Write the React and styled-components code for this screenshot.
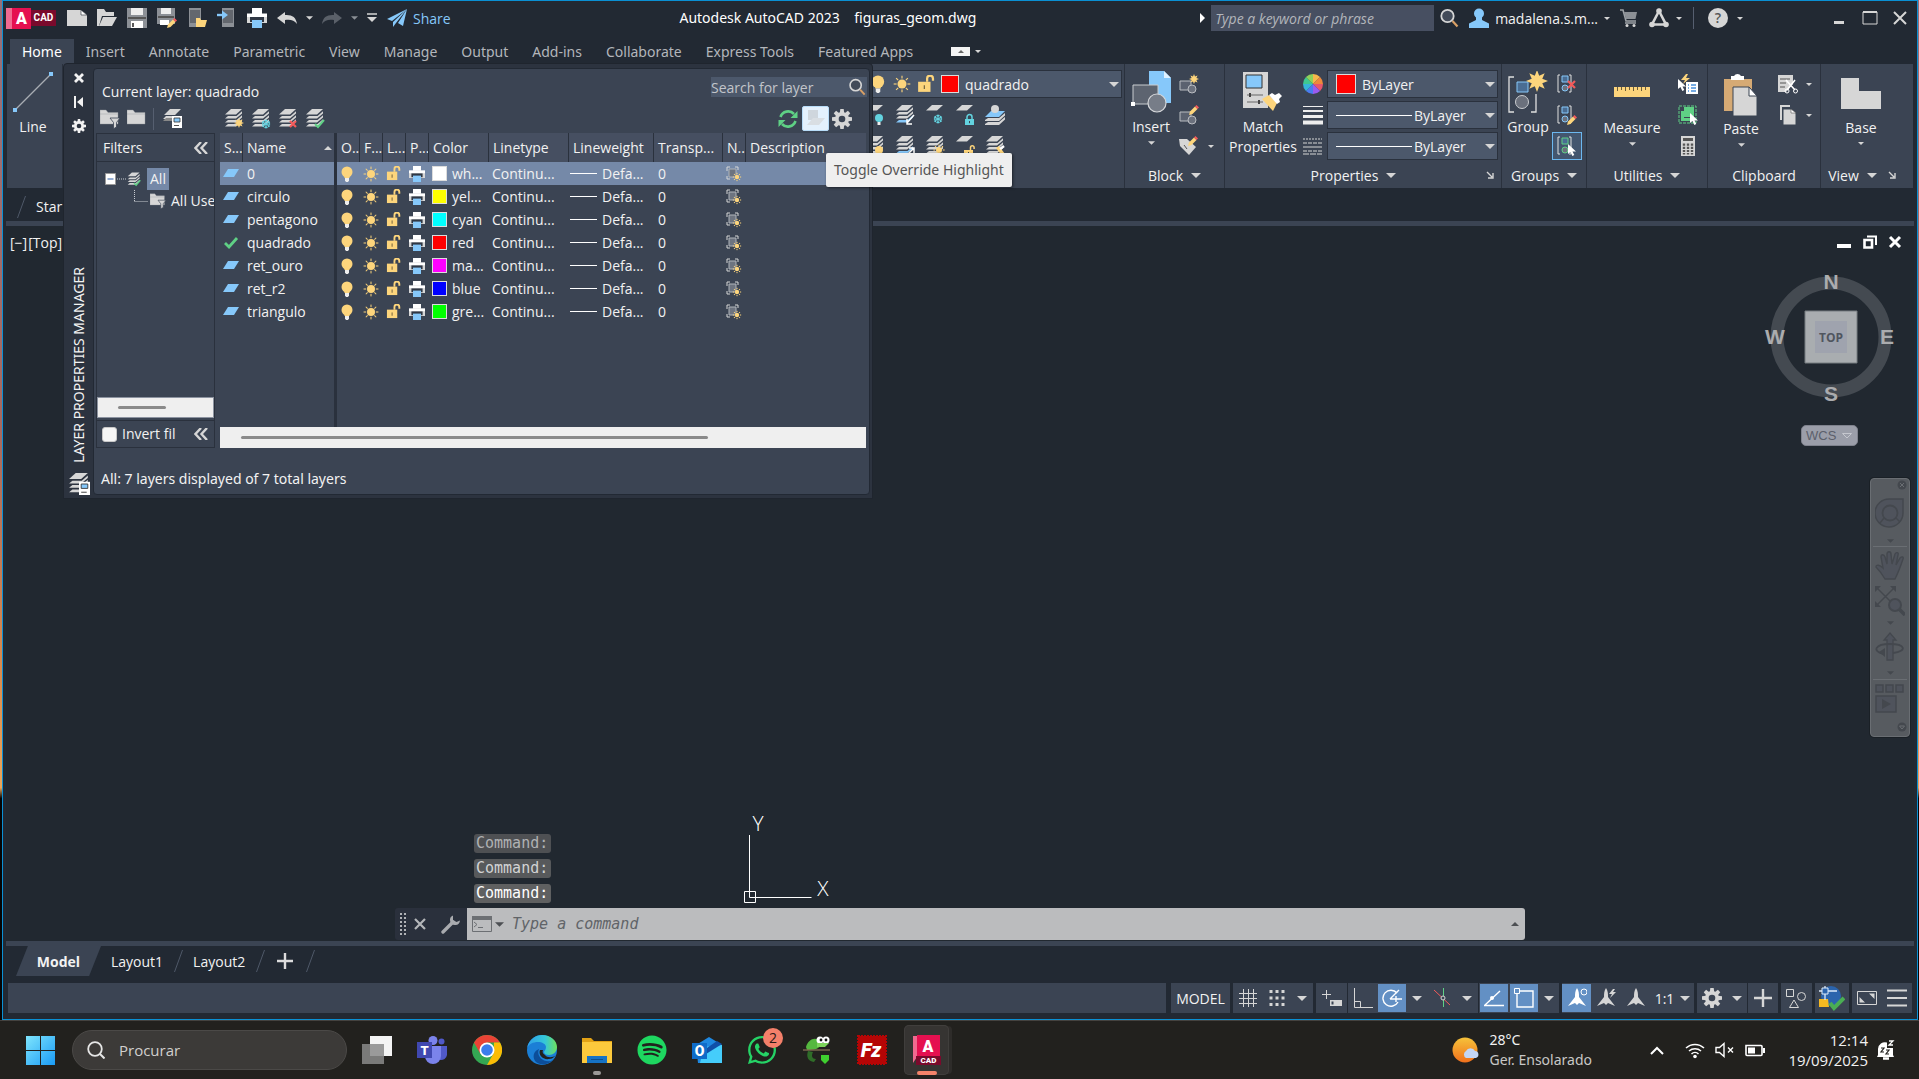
import React from "react";
import styled, { createGlobalStyle, css } from "styled-components";
import { FaSpotify, FaWhatsapp } from "react-icons/fa";

const c = {
  frame: "#222933",
  canvas: "#212830",
  panel: "#3b4453",
  line: "#2a313d",
  field: "#4c586b",
  head: "#464f61",
  select: "#7589a8",
  text: "#f2f2f2",
  dim: "#b3b6bb",
  icon: "#d6d6d6",
  blue: "#86c8fa",
  yellow: "#fdd57c",
  red: "#f25a5a",
  green: "#5fd085",
  teal: "#63d3e0",
  active: "#6390c4",
  border: "#0a90d4",
};

const wide = `"Noto Sans", "Open Sans", sans-serif`;

const Global = createGlobalStyle`
  html, body { margin: 0; height: 100%; background: #000; }
  *, *::before, *::after { box-sizing: border-box; }
  body, button, input, select, table {
    font-family: "Open Sans", "Noto Sans", sans-serif;
    font-size: 14px;
    color: ${c.text};
  }
  body { line-height: 20px; overflow: hidden; }
  button { border: 0; padding: 0; margin: 0; background: none; }
  svg { display: block; flex: none; }
`;

/* ---------- shell ---------- */

const Desktop = styled.div`
  display: flex;
  flex-direction: column;
  height: 100vh;
  background: linear-gradient(#94707a 0, #a8685c 40%, #d98a4c 62%, #e9a55a 73%, #050505 74%);
`;

const AppWindow = styled.div`
  position: relative;
  flex: 1;
  min-height: 0;
  margin: 0 1px 0 2px;
  display: flex;
  flex-direction: column;
  background: ${c.frame};
  border: 1px solid ${c.border};
`;

const Row = styled.div`
  display: flex;
  align-items: center;
  gap: ${(p) => p.$gap || 0}px;
`;

const IconButton = styled.button`
  display: flex;
  align-items: center;
  justify-content: center;
  flex: none;
  width: ${(p) => p.$w || 30}px;
  height: ${(p) => p.$h || 28}px;
  ${(p) =>
    p.$pressed &&
    css`
      background: #43566f;
      border: 1px solid #6cb8f0;
    `}
`;

const Caret = ({ w = 8, color = c.icon, up }) => (
  <svg width={w} height={Math.ceil(w / 2)} viewBox="0 0 8 4">
    <path d={up ? "M0 4h8L4 0z" : "M0 0h8L4 4z"} fill={color} />
  </svg>
);

/* ---------- icon drawing helpers ---------- */

const I = ({ s = 20, w, h, box, children }) => (
  <svg width={w || s} height={h || s} viewBox={box || "0 0 20 20"} fill="none">
    {children}
  </svg>
);

const Sheets = ({ n = 3, bottom = c.icon, top = c.icon }) => (
  <>
    <path d="M7 0h11l-6 5.500H1z" fill={top} />
    {n > 1 && <path d="M1 9.500 4 7h8.500L18 2.200V4.500L12 9.500z" fill={n === 2 ? bottom : c.icon} />}
    {n > 2 && <path d="M1 13.500 4 11h8.500L18 6.200V8.500L12 13.500z" fill={c.icon} />}
    {n > 2 && <path d="M1 17.500 4 15h8.500L18 10.200V12.500L12 17.500z" fill={bottom} />}
  </>
);

const SunMark = ({ x = 15, y = 15, r = 3, color = c.yellow }) => (
  <g transform={`translate(${x} ${y})`}>
    <circle r={r} fill={color} />
    {[0, 45, 90, 135, 180, 225, 270, 315].map((a) => (
      <path key={a} d={`M0 ${-r - 0.8}V${-r * 1.8 - 0.2}`} stroke={color} strokeWidth="1" transform={`rotate(${a})`} />
    ))}
  </g>
);

const StarMark = ({ x, y, r }) => (
  <path
    transform={`translate(${x} ${y}) scale(${r})`}
    d="M0-1 .2-.48.7-.7.48-.2 1 0 .48.2.7.7.2.48 0 1-.2.48-.7.7-.48.2-1 0-.48-.2-.7-.7-.2-.48z"
    fill={c.yellow}
  />
);

const SnowMark = ({ x = 15, y = 15, color = c.teal }) => (
  <g transform={`translate(${x} ${y})`} stroke={color} strokeWidth="1.100">
    {[0, 60, 120].map((a) => (
      <path key={a} d="M0-4.500V4.500M-1.500-3.800 0-2.500 1.500-3.800M-1.500 3.800 0 2.500 1.500 3.800" transform={`rotate(${a})`} />
    ))}
  </g>
);

const LockMark = ({ x = 11, y = 11, color = c.yellow, open = true }) => (
  <g transform={`translate(${x} ${y})`}>
    <path d="M0 4h9v6H0z" fill={color} />
    <path d={open ? "M6.500 4V1.500a1.800 1.800 0 0 1 3.600 0V3" : "M2 4V2a2.500 2.500 0 0 1 5 0v2"} stroke={color} strokeWidth="1.500" />
    <path d="M4.500 6v2.200" stroke="#3b4453" />
  </g>
);

const Pencil = ({ x = 10, y = 10 }) => (
  <g transform={`translate(${x} ${y})`}>
    <path d="M1 6.500 6 1.500 8.500 4 3.500 9 0 10z" fill={c.yellow} />
    <path d="M6 1.500 7.500 0 10 2.500 8.500 4z" fill={c.red} />
  </g>
);

const Cursor = ({ x = 10, y = 8, s = 1 }) => (
  <path transform={`translate(${x} ${y}) scale(${s})`} d="M0 0v10l2.500-2 1.800 4 2-1-1.800-3.600H8z" fill="#fff" />
);

const Tick = ({ x = 9, y = 11 }) => (
  <path transform={`translate(${x} ${y})`} d="m1 4 3 3L10 0" stroke={c.green} strokeWidth="2" />
);

const Folder = ({ w = 14 }) => (
  <path d={`M0 1h6l2 2.500h${w - 8}V15H0z M0 5h${w}`} fill={c.icon} stroke="#8f949b" strokeWidth=".4" />
);

const Funnel = ({ x = 10, y = 9 }) => (
  <path transform={`translate(${x} ${y})`} d="M0 0h10L6.500 4.500V9l-3 1.800V4.500z" fill={c.icon} stroke={c.panel} strokeWidth=".8" />
);

const Bulb = ({ s = 16 }) => (
  <I s={s} box="0 0 16 16">
    <circle cx="8" cy="6" r="5.500" fill={c.yellow} />
    <path d="M5.500 10h5v2h-5z" fill={c.yellow} />
    <path d="M6 12h4v2.500l-1 1.500H7l-1-1.500z" fill="#eee" />
  </I>
);
const Sun = ({ s = 16 }) => (
  <I s={s} box="0 0 16 16">
    <SunMark x={8} y={8} r={4} />
  </I>
);
const Unlock = ({ s = 16 }) => (
  <I s={s} box="0 0 16 16">
    <path d="M1 6h11v9H1z" fill={c.yellow} />
    <path d="M9 6V3.200a2.600 2.600 0 0 1 5.200 0V5" stroke={c.yellow} strokeWidth="2" />
    <path d="M6.500 9v3.500" stroke="#6b5c3a" />
  </I>
);
const Printer = ({ s = 16 }) => (
  <I s={s} box="0 0 20 20">
    <path d="M5 0h10v6H5z" fill="#fff" />
    <path d="M0 6h20v9H0z" fill={c.icon} />
    <path d="M3 9h14v5H3z" fill="#2f3744" />
    <path d="M0 5.500h20V9H0z" fill="#fff" />
    <path d="M5 12h10v8H5z" fill={c.blue} />
  </I>
);
const Magnifier = ({ s = 20 }) => (
  <I s={s} box="0 0 20 20">
    <circle cx="8.500" cy="8" r="6.200" stroke={c.icon} strokeWidth="1.800" fill="#434b59" />
    <path d="m13.500 13 5 5.500" stroke="#d9a066" strokeWidth="2.200" />
  </I>
);
const Gear = ({ s = 20, color = c.icon, hole = c.panel }) => (
  <I s={s}>
    {[0, 45, 90, 135].map((a) => (
      <path key={a} d="M8.300 0h3.400l.5 4v12l-.5 4H8.300l-.5-4V4z" fill={color} transform={`rotate(${a} 10 10)`} />
    ))}
    <circle cx="10" cy="10" r="7" fill={color} />
    <circle cx="10" cy="10" r="3.300" fill={hole} />
  </I>
);
const Double = () => (
  <I w={14} h={12} box="0 0 14 12">
    <path d="M7 0 1.500 6 7 12M13 0 7.500 6 13 12" stroke={c.icon} strokeWidth="2.400" />
  </I>
);
const PaletteMark = () => (
  <I s={20}>
    <path d="M8 0h11l-6 6H2zM4 7h8l-1 3H1z" fill={c.icon} />
    <path d="M1 12 4 9h6v3z" fill="#888" />
    <path d="M10 7h10v12H10z" fill="#fff" />
    <path d="M12 9h6v4h-6z" fill={c.blue} stroke="#333" strokeWidth=".8" />
    <path d="M12 16.500h5" stroke="#555" />
  </I>
);

/* ---------- title bar ---------- */

const TitleBar = styled.header`
  display: flex;
  align-items: center;
  height: 38px;
  padding: 0 2px 4px 3px;
`;
const Brand = styled.div`
  display: flex;
  align-items: center;
  margin-right: 6px;
  font-family: "Roboto", sans-serif;
  color: #fff;
`;
const BrandA = styled.span`
  width: 25px;
  height: 21px;
  padding-left: 6px;
  text-align: center;
  font-size: 16px;
  font-weight: 900;
  line-height: 21px;
  background: linear-gradient(90deg, #f06a90 6px, #e51050 6px);
`;
const BrandCad = styled.span`
  width: 25px;
  height: 16px;
  text-align: center;
  font-size: 10px;
  font-weight: 700;
  line-height: 16px;
  background: #7a0a2c;
`;
const ShareButton = styled.button`
  display: flex;
  align-items: center;
  gap: 6px;
  padding: 0 5px;
  color: ${c.blue};
`;
const WindowTitle = styled.h1`
  flex: 1;
  margin: 0;
  text-align: center;
  font-family: ${wide};
  font-size: 14px;
  font-weight: 400;
  color: #fff;
  white-space: pre;
`;
const HelpSearch = styled.input`
  width: 223px;
  height: 26px;
  padding: 0 4px;
  margin-left: 6px;
  border: 0;
  background: #474f61;
  font-style: italic;
  &::placeholder { color: ${c.dim}; opacity: 1; }
`;
const UserButton = styled.button`
  display: flex;
  align-items: center;
  gap: 6px;
  padding: 0 4px 0 5px;
`;
const Divider = styled.span`
  width: 1px;
  height: ${(p) => p.$h || 22}px;
  background: #565f70;
  margin: 0 ${(p) => p.$m || 0}px;
`;
const Push = styled.span`
  width: ${(p) => p.$w}px;
  flex: none;
`;

const quick = {
  New: <I><path d="M0 2h14l6 5v11H0z" fill={c.icon} /><path d="M14 2v5h6z" fill="#fff" stroke={c.frame} strokeWidth=".6" /></I>,
  Open: <I><path d="M0 1h7l2 3h8v4H5L2 18H0z" fill={c.icon} /><path d="M6 9h14l-5 9H2z" fill={c.icon} /></I>,
  Save: <I><path d="M0 0h20v20H0z" fill="#8c9096" /><path d="M4 0h12v7H4z" fill="#eee" /><path d="M1 9h18v2H1z" fill="#555" /><path d="M4 13h12v7H4z" fill="#fff" /><path d="M6 15v4" stroke="#222" strokeWidth="1.500" /></I>,
  "Save As": <I><path d="M0 0h18v16H0z" fill="#8c9096" /><path d="M4 0h10v6H4z" fill="#eee" /><path d="M1 8h16v2H1z" fill="#555" /><path d="M3 12h9v5H3z" fill="#fff" /><Pencil /></I>,
  "Open from Web": <I><path d="M2 0h12v19H2z" fill="#8c9096" /><path d="M3 2h10v13H3z" fill="#63676e" /><path d="M9 10h4l1 2h6l-2 7H9z" fill={c.yellow} /></I>,
  "Save to Web": <I><path d="M5 0h12v19H5z" fill="#8c9096" /><path d="M6 2h10v13H6z" fill="#63676e" /><path d="M0 7h6" stroke={c.blue} strokeWidth="2.400" /><path d="M5 2.500 11 7l-6 4.500z" fill={c.blue} /></I>,
  Plot: <Printer s={20} />,
  Undo: <I><path d="M0 10 8 4v3c7-.5 11 2 12 9-3-4-6-4.500-12-4v4z" fill={c.icon} /></I>,
};

function Title() {
  return (
    <TitleBar>
      <Brand>
        <BrandA>A</BrandA>
        <BrandCad>CAD</BrandCad>
      </Brand>
      {Object.entries(quick).map(([k, v]) => (
        <IconButton key={k} aria-label={k}>{v}</IconButton>
      ))}
      <IconButton $w={15} aria-label="Undo list"><Caret w={7} /></IconButton>
      <IconButton aria-label="Redo">
        <I><path d="M20 10 12 4v3C5 6.500 1 9 0 16c3-4 6-4.500 12-4v4z" fill="#5a6069" /></I>
      </IconButton>
      <IconButton $w={15} aria-label="Redo list"><Caret w={7} color="#8a8f96" /></IconButton>
      <IconButton $w={20} aria-label="Customize quick access">
        <I w={10} h={10} box="0 0 10 10"><path d="M0 1h10" stroke={c.icon} strokeWidth="1.500" /><path d="M0 4h10L5 9z" fill={c.icon} /></I>
      </IconButton>
      <ShareButton>
        <I><path d="M20 1 0 11l5 2zM20 1 6 14v5l3-4zM20 1l-9 14 5 3z" fill={c.blue} /></I>
        Share
      </ShareButton>
      <WindowTitle>{"Autodesk AutoCAD 2023    figuras_geom.dwg"}</WindowTitle>
      <I w={5} h={10} box="0 0 5 10"><path d="M0 0v10l5-5z" fill="#fff" /></I>
      <HelpSearch placeholder="Type a keyword or phrase" aria-label="Type a keyword or phrase" />
      <IconButton aria-label="Search help"><Magnifier /></IconButton>
      <UserButton>
        <I><circle cx="10" cy="5.500" r="5" fill={c.blue} /><path d="M7 9h6v3l7 3.500V20H0v-4.500L7 12z" fill={c.blue} /></I>
        madalena.s.m...
        <Caret w={6} />
      </UserButton>
      <IconButton aria-label="Store">
        <I><path d="M1 2h3l3 11h10M6 15h11" stroke="#9da1a6" strokeWidth="1.600" /><path d="M5 4h13l-1.500 7H7z" fill="#8c9096" /><circle cx="8" cy="17.500" r="1.500" fill={c.icon} /><circle cx="15" cy="17.500" r="1.500" fill={c.icon} /></I>
      </IconButton>
      <IconButton aria-label="Autodesk Access">
        <I><path d="M10 3 3 16.500h14z" stroke={c.icon} strokeWidth="2.600" /><circle cx="10" cy="3" r="2.800" fill={c.icon} /><circle cx="3" cy="16.500" r="2.800" fill={c.icon} /><circle cx="17" cy="16.500" r="2.800" fill={c.icon} /></I>
      </IconButton>
      <IconButton $w={10} aria-label="Access list"><Caret w={6} /></IconButton>
      <Divider $m={9} />
      <IconButton aria-label="Help">
        <I><circle cx="10" cy="10" r="10" fill={c.icon} /><text x="10" y="15" textAnchor="middle" fontSize="14" fontWeight="600" fill="#555">?</text></I>
      </IconButton>
      <IconButton $w={14} aria-label="Help list"><Caret w={6} /></IconButton>
      <Push $w={76} />
      <IconButton $w={31} aria-label="Minimize"><I w={16} h={16} box="0 0 16 16"><path d="M3 11h10v3H3z" fill={c.icon} /></I></IconButton>
      <IconButton $w={31} aria-label="Maximize"><I w={16} h={16} box="0 0 16 16"><path d="M1 2h14v12H1z" stroke={c.icon} /><path d="M1 2h14" stroke={c.icon} strokeWidth="2" /></I></IconButton>
      <IconButton aria-label="Close"><I w={16} h={16} box="0 0 16 16"><path d="m2 2 12 12M14 2 2 14" stroke={c.icon} strokeWidth="2" /></I></IconButton>
    </TitleBar>
  );
}

/* ---------- ribbon ---------- */

const Tabs = styled.nav`
  display: flex;
  align-items: center;
  height: 25px;
  padding-left: 7px;
`;
const Tab = styled.button`
  height: 25px;
  padding: 0 12px;
  font-family: ${wide};
  line-height: 24px;
  color: ${(p) => (p.$on ? "#fff" : c.dim)};
  background: ${(p) => (p.$on ? c.panel : "transparent")};
`;
const Pill = styled.span`
  display: flex;
  align-items: center;
  justify-content: center;
  width: 19px;
  height: 9px;
  margin: 0 5px 0 26px;
  background: #f4f4f4;
`;
const Ribbon = styled.div`
  display: flex;
  height: 124px;
  margin: 0 4px;
  background: ${c.panel};
`;
const Panel = styled.section`
  display: flex;
  flex-direction: column;
  ${(p) => (p.$w ? `width: ${p.$w}px;` : "flex: 1;")}
  border-right: ${(p) => (p.$last ? 0 : 1)}px solid ${c.line};
`;
const PanelBody = styled.div`
  display: flex;
  align-items: flex-start;
  justify-content: ${(p) => p.$justify || "flex-start"};
  gap: ${(p) => p.$gap || 0}px;
  flex: 1;
  padding: 6px ${(p) => p.$pr || 0}px 0 ${(p) => p.$pl || 0}px;
`;
const PanelFoot = styled.footer`
  display: flex;
  align-items: center;
  height: 24px;
  padding: 0 ${(p) => p.$corner || 0}px 2px 0;
`;
const PanelName = styled.button`
  display: flex;
  align-items: center;
  justify-content: center;
  gap: 8px;
  flex: 1;
`;
const Big = styled.button`
  display: flex;
  flex-direction: column;
  align-items: center;
  width: ${(p) => p.$w}px;
  line-height: 20px;
  flex: none;
`;
const BigArt = styled.span`
  display: flex;
  align-items: center;
  height: ${(p) => p.$h || 44}px;
  margin-bottom: ${(p) => (p.$h ? 0 : 3)}px;
`;
const BigCaret = styled.span`
  padding-top: 4px;
`;
const Stackv = styled.div`
  display: flex;
  flex-direction: column;
  gap: 3px;
  flex: ${(p) => (p.$grow ? 1 : "none")};
`;
const Combo = styled.label`
  display: flex;
  align-items: center;
  gap: ${(p) => p.$gap || 6}px;
  height: 28px;
  padding: 0 2px 0 8px;
  background: ${c.field};
  border: 1px solid ${c.line};
`;
const Pick = styled.select`
  appearance: none;
  border: 0;
  background: transparent;
  padding: 0;
  flex: ${(p) => (p.$grow ? 1 : "none")};
  width: ${(p) => (p.$grow ? "auto" : "69px")};
  height: 24px;
`;
const Swatch = styled.span`
  width: ${(p) => p.$s}px;
  height: ${(p) => p.$s}px;
  flex: none;
  background: ${(p) => p.$c};
  border: 1px solid #dcdcdc;
`;
const Rule = styled.span`
  height: 1px;
  background: #fff;
  width: ${(p) => (p.$w ? p.$w + "px" : "auto")};
  flex: ${(p) => (p.$w ? "none" : 1)};
`;
const CaretSlot = styled.button`
  display: flex;
  align-items: center;
  height: 28px;
  margin-left: -8px;
`;
const LowCaret = styled.button`
  align-self: flex-start;
  margin-top: 62px;
  width: 14px;
  height: 28px;
  display: flex;
  align-items: center;
  justify-content: center;
`;

const Foot = ({ name, menu = true, corner }) => (
  <PanelFoot $corner={corner}>
    <PanelName>
      {name}
      {menu && <Caret w={10} />}
    </PanelName>
    {corner && (
      <IconButton $w={16} $h={16} aria-label={`${name} settings`}>
        <I s={8} box="0 0 8 8"><path d="M1 1l5 5M7 2v5H2" stroke={c.icon} strokeWidth="1.400" /></I>
      </IconButton>
    )}
  </PanelFoot>
);

const blockBase = (
  <>
    <path d="M1 7h11v9H1z" fill="#5b6270" stroke="#b9bcc1" />
    <circle cx="13" cy="15" r="4" fill="#6b717d" stroke="#b9bcc1" />
  </>
);
const groupBase = (color) => (
  <>
    <path d="M3 1H1v17h2M12 1h2v17h-2" stroke="#e0e0e0" />
    <path d="M5 2h6v6H5z" fill="#4a6d93" stroke={color} />
    <circle cx="8" cy="14" r="3" stroke={color} fill="#6b717d" />
  </>
);

const layerTools = [
  [<I key="a"><Sheets n={1} /><circle cx="14" cy="13" r="4" fill={c.teal} /><path d="M12.500 17h3v3h-3z" fill="#eee" /></I>, "Off"],
  [<I key="b"><Sheets bottom={c.blue} /><path d="m19 10-7 8M12 14v5h5" stroke="#fff" strokeWidth="1.500" /></I>, "Isolate"],
  [<I key="c"><Sheets n={1} /><SnowMark x={13} y={14} /></I>, "Freeze"],
  [<I key="d"><Sheets n={1} /><LockMark x={10} y={10} color={c.teal} open={false} /></I>, "Lock"],
  [<I key="e"><path d="M6 6h14l-6 6H0z" fill={c.blue} /><circle cx="10" cy="4" r="4" fill={c.icon} /><path d="m0 15 3-2h11l6-5v2.500L14 16H0zM0 19l3-2h11l6-5v2.500L14 20H0z" fill={c.icon} /></I>, "Make Current"],
  [<I key="f"><Sheets /><circle cx="14" cy="14" r="4" fill={c.yellow} /></I>, "Turn All On"],
  [<I key="g"><Sheets bottom={c.blue} /><path d="m12 19 7-7M14 12h5v5" stroke="#fff" strokeWidth="1.500" /></I>, "Unisolate"],
  [<I key="h"><Sheets /><SunMark x={14} y={14} /></I>, "Thaw"],
  [<I key="i"><Sheets n={1} /><LockMark x={9} y={10} /></I>, "Unlock"],
  [<I key="j"><Sheets /><path d="m11 12 6 8 3-2-6-8z" fill={c.yellow} /><path d="m15 13 4-3" stroke="#fff" strokeWidth="2.500" /></I>, "Match"],
];
const LayerGrid = styled.div`
  display: grid;
  grid-template-columns: repeat(5, 30px);
  grid-auto-rows: 28px;
  row-gap: 3px;
  margin-top: 3px;
`;
const LayerArea = styled.div`
  width: 262px;
`;

function RibbonBar() {
  return (
    <Ribbon>
      <Panel $w={56}>
        <PanelBody $pl={3}>
          <Big $w={46}>
            <BigArt>
              <I w={40} h={40} box="0 0 40 40"><path d="M2 38 38 2" stroke="#a8adb3" strokeWidth="1.200" /><path d="M0 36h4v4H0zM36 0h4v4h-4z" fill={c.blue} /></I>
            </BigArt>
            Line
          </Big>
        </PanelBody>
      </Panel>
      <Panel>
        <PanelBody $justify="flex-end" $pr={2}>
          <LayerArea>
            <Combo $gap={6}>
              <Bulb s={18} /><Sun s={18} /><Unlock s={18} />
              <Swatch $s={18} $c="red" />
              <Pick $grow aria-label="Layer"><option>quadrado</option></Pick>
              <Caret w={10} />
            </Combo>
            <LayerGrid>
              {layerTools.map(([art, name]) => (
                <IconButton key={name} aria-label={`Layer ${name}`}>{art}</IconButton>
              ))}
            </LayerGrid>
          </LayerArea>
        </PanelBody>
        <PanelFoot />
      </Panel>
      <Panel $w={100}>
        <PanelBody $pl={3}>
          <Big $w={46}>
            <BigArt>
              <I w={40} h={42} box="0 0 40 42">
                <path d="M18 0h15l7 7v25H18z" fill={c.blue} /><path d="M33 0v7h7z" fill="#dff1ff" />
                <path d="M2 14h25v19H2z" fill="#5d6470" stroke="#c9ccd0" />
                <circle cx="26" cy="32" r="9" fill="#777d88" stroke="#d5d7da" strokeWidth="1.200" />
                <path d="M0 31h4v4H0z" fill="#fff" />
              </I>
            </BigArt>
            Insert
            <BigCaret><Caret w={7} /></BigCaret>
          </Big>
          <Stackv>
            <IconButton aria-label="Create block"><I>{blockBase}<StarMark x={15} y={5} r={5} /></I></IconButton>
            <IconButton aria-label="Edit block"><I>{blockBase}<Pencil x={10} y={0} /></I></IconButton>
            <IconButton aria-label="Edit attributes"><I><path d="M0 3h8l9 8-7 8L1 10z" fill={c.icon} /><Pencil x={9} y={0} /><path d="m5 9 3 4" stroke="#555" /></I></IconButton>
          </Stackv>
          <LowCaret aria-label="Attributes list"><Caret w={6} /></LowCaret>
        </PanelBody>
        <Foot name="Block" />
      </Panel>
      <Panel $w={277}>
        <PanelBody $pl={2} $pr={3}>
          <Big $w={72}>
            <BigArt>
              <I w={40} h={42} box="0 0 40 42">
                <path d="M0 1h25v36H0z" fill={c.icon} /><path d="M3 4h16v13H3z" fill={c.blue} stroke="#333" />
                <path d="M4 24h16M4 31h16" stroke="#666" /><path d="M7 22v4M16 29v4" stroke="#444" strokeWidth="2" />
                <path d="m19 28 7-4 8 8-4 8z" fill={c.yellow} /><path d="m26 24 3-2 3 2 4-2 3 3-3 3 1 3-3 2z" fill="#fff" />
              </I>
            </BigArt>
            Match<br />Properties
          </Big>
          <Stackv>
            <IconButton $w={28} aria-label="Object color">
              <I>
                {["#f7b84b", "#f0883c", "#e8566c", "#9a5cf0", "#4a7cf0", "#36b6d6", "#3fc98f", "#8ed25a"].map((f, i) => (
                  <path key={f} d="M10 10V0a10 10 0 0 1 7.070 2.930z" fill={f} transform={`rotate(${i * 45} 10 10)`} />
                ))}
              </I>
            </IconButton>
            <IconButton $w={28} aria-label="Lineweight"><I><path d="M0 1.500h20" stroke="#eee" /><path d="M0 6h20" stroke="#eee" strokeWidth="2" /><path d="M0 11.500h20" stroke="#eee" strokeWidth="3" /><path d="M0 17.500h20" stroke="#eee" strokeWidth="4" /></I></IconButton>
            <IconButton $w={28} aria-label="Linetype"><I><path d="M0 3h19" stroke={c.icon} strokeDasharray="2 1" /><path d="M0 7h19M0 15h19" stroke={c.icon} strokeDasharray="4 1" /><path d="M0 11h19" stroke={c.icon} /><path d="M0 18h19" stroke={c.icon} strokeDasharray="6 1" /></I></IconButton>
          </Stackv>
          <Stackv $grow>
            <Combo>
              <Swatch $s={20} $c="red" />
              <Pick $grow aria-label="Color"><option>ByLayer</option></Pick>
              <Caret w={10} />
            </Combo>
            {["Lineweight", "Linetype"].map((k) => (
              <Combo key={k} $gap={2}>
                <Rule />
                <Pick aria-label={k}><option>ByLayer</option></Pick>
                <Caret w={10} />
              </Combo>
            ))}
          </Stackv>
        </PanelBody>
        <Foot name="Properties" corner={3} />
      </Panel>
      <Panel $w={85}>
        <PanelBody $pl={2}>
          <Big $w={48}>
            <BigArt>
              <I w={40} h={42} box="0 0 40 42">
                <path d="M6 6H1v35h5M23 41h5V23" stroke="#e0e0e0" strokeWidth="1.300" />
                <path d="M9 11h11v10H9z" fill="#4a6d93" stroke={c.blue} /><circle cx="14" cy="31" r="6.500" fill="#6b717d" stroke="#c9ccd0" />
                <StarMark x={29} y={10} r={11} />
              </I>
            </BigArt>
            Group
          </Big>
          <Stackv>
            <IconButton aria-label="Ungroup"><I>{groupBase(c.blue)}<path d="m11 7 7 7M18 7l-7 7" stroke={c.red} strokeWidth="2.200" /></I></IconButton>
            <IconButton aria-label="Group edit"><I>{groupBase(c.blue)}<Pencil /></I></IconButton>
            <IconButton $pressed aria-label="Group selection"><I>{groupBase(c.green)}<Cursor x={11} y={8} /></I></IconButton>
          </Stackv>
        </PanelBody>
        <Foot name="Groups" />
      </Panel>
      <Panel $w={121}>
        <PanelBody $pl={14} $gap={10}>
          <Big $w={62}>
            <BigArt $h={48}>
              <I w={36} h={14} box="0 0 36 14"><path d="M0 0h36v10H0z" fill={c.yellow} /><path d="M3.500 0v4M7.500 0v3M11.500 0v4M15.500 0v3M19.500 0v4M23.500 0v3M27.500 0v4M31.500 0v3" stroke="#6b5c3a" /></I>
            </BigArt>
            Measure
            <BigCaret><Caret w={7} /></BigCaret>
          </Big>
          <Stackv>
            <IconButton aria-label="Quick select"><I><path d="M8 0 3 6h4L5 10l7-6H8l2-4z" fill={c.yellow} /><path d="M8 8h12v12H8z" fill="#fff" /><path d="M10 11h1M13 11h5M10 14h1M13 14h5M10 17h1M13 17h5" stroke="#4a90d9" strokeWidth="1.400" /><Cursor x={0} y={5} /></I></IconButton>
            <IconButton aria-label="Select all"><I><path d="M1 1h17v17H1z" stroke={c.green} strokeDasharray="3 1" /><path d="M3 6h3v7h7v3H3z" fill={c.green} /><path d="M6 2h10v10H6z" fill={c.green} /><Cursor x={12} y={8} /></I></IconButton>
            <IconButton aria-label="Quick calculator"><I><path d="M3 0h14v20H3z" fill={c.icon} /><path d="M5 2h10v3H5z" fill="#555" /><path d="M6 7.500v11M10 7.500v11M14 7.500v11" stroke="#555" strokeWidth="2.400" strokeDasharray="2.200 1" /></I></IconButton>
          </Stackv>
        </PanelBody>
        <Foot name="Utilities" />
      </Panel>
      <Panel $w={113}>
        <PanelBody $pl={12} $gap={11}>
          <Big $w={42}>
            <BigArt $h={49}>
              <I w={34} h={44} box="0 0 34 44"><path d="M0 6h28v32H0z" fill="#d6aa74" /><path d="M7 7V3h3a4 4 0 0 1 7 0h3v4z" fill="#fff" /><path d="M9 14h16l8 9v20H9z" fill={c.icon} stroke={c.panel} /><path d="M25 14v9h8z" fill="#fff" stroke={c.panel} /></I>
            </BigArt>
            Paste
            <BigCaret><Caret w={7} /></BigCaret>
          </Big>
          <Stackv>
            <IconButton aria-label="Cut"><I><path d="M0 1h15v9L8 18H0z" fill={c.icon} /><path d="M2 5h10M2 9h6M2 13h5" stroke="#555" /><path d="m8 6 9 10M17 6 9 16" stroke="#fff" strokeWidth="1.600" /><circle cx="9" cy="17" r="2" stroke="#fff" /><circle cx="17.500" cy="17" r="2" stroke="#fff" /></I></IconButton>
            <IconButton aria-label="Copy"><I><path d="M2 0h10v2H4v13H2z" fill={c.icon} /><path d="M5 4h8l5 4v12H5z" fill={c.icon} stroke={c.panel} /><path d="M13 4v4h5z" fill="#fff" stroke="#555" strokeWidth=".6" /></I></IconButton>
          </Stackv>
          <Stackv>
            <CaretSlot aria-label="Cut list"><Caret w={6} /></CaretSlot>
            <CaretSlot aria-label="Copy list"><Caret w={6} /></CaretSlot>
          </Stackv>
        </PanelBody>
        <Foot name="Clipboard" menu={false} />
      </Panel>
      <Panel $w={92} $last>
        <PanelBody $pl={16}>
          <Big $w={48}>
            <BigArt $h={48}><I w={40} h={32} box="0 0 40 32"><path d="M0 0h18v13h22v18H0z" fill={c.icon} /></I></BigArt>
            Base
            <BigCaret><Caret w={6} /></BigCaret>
          </Big>
        </PanelBody>
        <Foot name="View" corner={13} />
      </Panel>
    </Ribbon>
  );
}

/* ---------- document strip and drawing canvas ---------- */

const DocTabs = styled.div`
  display: flex;
  align-items: center;
  gap: 10px;
  height: 33px;
  padding: 4px 0 0 14px;
`;
const DocTab = styled.button`
  display: flex;
  align-items: center;
  height: 30px;
  ${(p) =>
    p.$on &&
    css`
      width: 85px;
      justify-content: center;
      font-weight: 700;
      background: ${c.panel};
      clip-path: polygon(14% 0, 100% 0, 86% 100%, 0 100%);
    `}
`;
const Slash = () => (
  <I w={9} h={22} box="0 0 9 22"><path d="M8.500 0 .5 22" stroke="#4f5869" /></I>
);
const Canvas = styled.main`
  position: relative;
  flex: 1;
  min-height: 0;
  margin: 0 3px;
  background: ${c.canvas};
  border: solid ${c.panel};
  border-width: 5px 0;
`;
const CanvasTop = styled.div`
  display: flex;
  justify-content: space-between;
  align-items: center;
  height: 30px;
  padding: 2px 9px 0 4px;
`;
const Cube = styled.div`
  position: absolute;
  top: 38px;
  right: 11px;
`;
const Wcs = styled.button`
  position: absolute;
  top: 199px;
  right: 56px;
  display: flex;
  align-items: center;
  justify-content: space-between;
  width: 57px;
  height: 21px;
  padding: 0 5px 0 4px;
  border-radius: 5px;
  border: 1px solid #7f828d;
  background: #9b9ea9;
  color: #5c606b;
  font: 13px "Liberation Sans", sans-serif;
`;
const NavBar = styled.nav`
  position: absolute;
  top: 252px;
  right: 4px;
  display: flex;
  flex-direction: column;
  align-items: center;
  width: 40px;
  height: 259px;
  border-radius: 4px;
  background: #575b60;
  border: 1px solid #6a6e73;
  box-shadow: 0 0 0 1px #1a2026;
`;
const NavSlot = styled.button`
  display: flex;
  align-items: center;
  justify-content: ${(p) => (p.$end ? "flex-end" : "center")};
  width: 34px;
  height: ${(p) => p.$h}px;
  border-bottom: ${(p) => (p.$ruled ? "1px solid #6a6e73" : 0)};
`;
const Ucs = styled.div`
  position: absolute;
  left: 737px;
  bottom: 25px;
`;
const History = styled.div`
  position: absolute;
  left: 468px;
  bottom: 38px;
  display: flex;
  flex-direction: column;
  gap: 6px;
`;
const HistoryLine = styled.span`
  width: 77px;
  height: 19px;
  padding-left: 2px;
  border-radius: 3px;
  background: ${(p) => p.$bg};
  color: ${(p) => p.$fg};
  font: 15px/19px "DejaVu Sans Mono", monospace;
`;
const CommandBar = styled.div`
  position: absolute;
  left: 389px;
  right: 389px;
  bottom: 1px;
  display: flex;
  height: 32px;
`;
const CommandGrip = styled.div`
  display: flex;
  align-items: center;
  gap: 7px;
  width: 72px;
  padding-left: 5px;
  background: #2a303c;
  border-radius: 3px 0 0 3px;
`;
const CommandField = styled.label`
  display: flex;
  align-items: center;
  flex: 1;
  gap: 3px;
  padding: 0 6px 0 5px;
  border-radius: 0 3px 3px 0;
  background: #bbbcbe;
`;
const CommandInput = styled.input`
  flex: 1;
  border: 0;
  padding: 0 0 0 5px;
  background: transparent;
  font: italic 15px "DejaVu Sans Mono", monospace;
  &::placeholder { color: #616468; opacity: 1; }
`;

const nk = "#44484e";
const nf = "#4f535c";

function Drawing() {
  return (
    <Canvas>
      <CanvasTop>
        <Row $gap={1}><button>[−]</button><button>[Top]</button></Row>
        <Row>
          <IconButton $w={22} aria-label="Minimize drawing"><I w={14} h={14} box="0 0 14 14"><path d="M0 9h14v4H0z" fill="#fff" /></I></IconButton>
          <IconButton aria-label="Restore drawing"><I w={14} h={14} box="0 0 14 14"><path d="M4 1.500h9V10" stroke="#fff" strokeWidth="2" /><path d="M1.500 5h7.500v7.500H1.500z" stroke="#fff" strokeWidth="2.600" /></I></IconButton>
          <IconButton $w={20} aria-label="Close drawing"><I w={14} h={14} box="0 0 14 14"><path d="m2 2 10 10M12 2 2 12" stroke="#fff" strokeWidth="3" /></I></IconButton>
        </Row>
      </CanvasTop>
      <Cube>
        <svg width="144" height="146" viewBox="0 0 144 146" fontFamily="Liberation Sans, sans-serif">
          <circle cx="72" cy="73" r="54" fill="none" stroke="#444a51" strokeWidth="13" />
          <path d="M46 47h52v52H46z" fill="#a9adb0" stroke="#777c80" />
          <path d="M56 57h32v32H56z" fill="#9fa3ae" />
          <g fontSize="21" fontWeight="700" fill="#abacae" textAnchor="middle">
            <text x="72" y="25">N</text><text x="72" y="137">S</text>
            <text x="16" y="80">W</text><text x="128" y="80">E</text>
          </g>
          <text x="72" y="78" fontSize="12" fontWeight="700" fontFamily="Open Sans, sans-serif" fill="#50555f" textAnchor="middle">TOP</text>
        </svg>
      </Cube>
      <Wcs>WCS<I w={10} h={6} box="0 0 10 6"><path d="M.5.500h9L5 5z" stroke="#c5c7ce" /></I></Wcs>
      <NavBar>
        <NavSlot $h={12} $end aria-label="Close bar"><I s={10} box="0 0 10 10"><circle cx="5" cy="5" r="4.500" fill={nk} /><path d="m3 3 4 4M7 3 3 7" stroke="#6a6e73" /></I></NavSlot>
        <NavSlot $h={44} aria-label="Steering wheel"><I s={30} box="0 0 30 30"><path d="M15 1h13v14A14 14 0 1 1 15 1z" fill={nf} stroke={nk} strokeWidth="1.500" /><circle cx="15" cy="15" r="7.500" fill={nf} stroke={nk} strokeWidth="1.800" /><path d="m9 20-4 5M21 20l4 4" stroke={nk} strokeWidth="1.500" /></I></NavSlot>
        <NavSlot $h={12} $ruled aria-label="Wheel list"><Caret w={7} color={nk} /></NavSlot>
        <NavSlot $h={37} aria-label="Pan"><I s={30} box="0 0 30 30"><path d="M10 28C7 23 4 19 1 16c0-3 4-2 7 1L6 6c0-3 3-3 4 0l2 7V3c0-3 4-3 4 0l1 10 3-10c1-2 4-2 3 1l-2 10 4-7c2-2 4-1 3 1-2 6-5 14-8 20z" fill={nf} stroke={nk} strokeWidth="1.400" /></I></NavSlot>
        <NavSlot $h={34} aria-label="Zoom"><I s={30} box="0 0 30 30"><path d="m2 2 17 17M19 2 2 19" stroke={nk} strokeWidth="1.500" /><path d="M0 0h6L0 6zM21 0h-6l6 6zM0 21v-6l6 6z" fill={nk} /><circle cx="20" cy="19" r="6" fill={nf} stroke={nk} strokeWidth="2" /><path d="m24 23 6 6" stroke={nk} strokeWidth="3.500" /></I></NavSlot>
        <NavSlot $h={10} aria-label="Zoom list"><Caret w={7} color={nk} /></NavSlot>
        <NavSlot $h={38} aria-label="Orbit"><I s={30} box="0 0 30 30"><path d="M12 28V8H9l6-7 6 7h-3v20z" fill={nf} stroke={nk} strokeWidth="1.300" /><path d="M8 22C-3 19 0 12 15 12s18 7 3 9" stroke={nk} strokeWidth="1.800" /><path d="m4 20 6-4v9z" fill={nk} /></I></NavSlot>
        <NavSlot $h={14} $ruled aria-label="Orbit list"><Caret w={7} color={nk} /></NavSlot>
        <NavSlot $h={38} aria-label="ShowMotion"><I s={30} box="0 0 30 30"><path d="M1 1h7v7H1zM11 1h7v7h-7zM21 1h7v7h-7zM1 12h20v16H1z" fill={nf} stroke={nk} strokeWidth="1.500" /><path d="m7 15 9 5-9 5z" fill={nk} /></I></NavSlot>
        <NavSlot $h={18} $end aria-label="Bar options"><I s={10} box="0 0 10 10"><circle cx="5" cy="5" r="4.500" fill={nk} /><path d="M2.500 4h5L5 7z" stroke="#6a6e73" /></I></NavSlot>
      </NavBar>
      <Ucs>
        <svg width="100" height="100" viewBox="0 0 100 100" fill="none" stroke="#fff">
          <path d="M6.500 19v62.500h62M1.500 75.500h11v11h-11z" />
          <g fill="#fff" stroke="none" fontFamily="Open Sans, sans-serif" fontWeight="300" fontSize="21" textAnchor="middle">
            <text x="15" y="15">Y</text><text x="80" y="80">X</text>
          </g>
        </svg>
      </Ucs>
      <History>
        <HistoryLine $bg="#4e5053" $fg="#b0b2b4">Command:</HistoryLine>
        <HistoryLine $bg="#57595b" $fg="#d2d3d4">Command:</HistoryLine>
        <HistoryLine $bg="#5f6061" $fg="#fff">Command:</HistoryLine>
      </History>
      <CommandBar>
        <CommandGrip>
          <I w={6} h={22} box="0 0 6 22"><path d="M1 0v22M5 0v22" stroke="#b0b2b6" strokeWidth="2" strokeDasharray="2 2" /></I>
          <IconButton $w={14} aria-label="Close command line"><I s={12} box="0 0 12 12"><path d="m1 1 10 10M11 1 1 11" stroke="#b4b6b9" strokeWidth="2.200" /></I></IconButton>
          <IconButton $w={34} aria-label="Customize"><I s={20}><path d="m2 18 10-10" stroke="#a9abaf" strokeWidth="3.400" strokeLinecap="round" /><path d="M12 1.500a5 5 0 1 0 7 5L15.500 8 12 6z" fill="#a9abaf" /></I></IconButton>
        </CommandGrip>
        <CommandField>
          <I w={20} h={16} box="0 0 20 16"><path d="M.5.500h19v15H.5z" stroke="#6c6f73" /><path d="M0 0h20v4H0z" fill="#6c6f73" /><path d="m2 6 3 2.500L2 11M6 11.500h5" stroke="#6c6f73" /></I>
          <Caret w={9} color="#4c4f53" />
          <CommandInput placeholder="Type a command" aria-label="Type a command" />
          <Caret w={8} color="#4c4f53" up />
        </CommandField>
      </CommandBar>
    </Canvas>
  );
}

/* ---------- layer properties manager ---------- */

const Manager = styled.aside`
  position: absolute;
  left: 60px;
  top: 62px;
  width: 810px;
  display: grid;
  grid-template-columns: 29px 1fr;
  padding: 4px 2px 3px 0;
  background: #2c333f;
  border: 1px solid #1f252e;
  border-radius: 4px 4px 0 0;
`;
const Rail = styled.div`
  display: flex;
  flex-direction: column;
  align-items: center;
`;
const RailTitle = styled.h2`
  margin: auto 0 10px;
  writing-mode: vertical-rl;
  transform: rotate(180deg);
  font-family: ${wide};
  font-size: 14px;
  font-weight: 400;
  line-height: 18px;
`;
const Sheet = styled.div`
  display: flex;
  flex-direction: column;
  height: 427px;
  background: ${c.panel};
  border: 1px solid #222934;
  border-radius: 4px;
`;
const SheetTop = styled.div`
  display: flex;
  align-items: flex-end;
  justify-content: space-between;
  height: 33px;
  padding: 0 2px 0 8px;
`;
const LayerSearch = styled.label`
  display: flex;
  align-items: center;
  width: 156px;
  height: 20px;
  margin-bottom: 5px;
  padding-right: 1px;
  background: ${c.field};
`;
const LayerSearchInput = styled.input`
  flex: 1;
  min-width: 0;
  border: 0;
  padding: 0;
  background: transparent;
  &::placeholder { color: #c2c5ca; opacity: 1; }
`;
const Tools = styled.div`
  display: flex;
  align-items: center;
  height: 31px;
  padding: 2px 14px 0 2px;
`;
const Spring = styled.span`
  flex: 1;
`;
const ToggleWrap = styled.div`
  position: relative;
`;
const Toggle = styled.button`
  display: flex;
  align-items: center;
  justify-content: center;
  width: 27px;
  height: 25px;
  background: #e4f1fd;
  border: 1px solid #b8dcf8;
  border-radius: 2px;
`;
const Tip = styled.div`
  position: absolute;
  left: 24px;
  top: 47px;
  z-index: 2;
  padding: 7px 8px;
  white-space: nowrap;
  font-family: ${wide};
  color: #555;
  background: #efefef;
  border-radius: 2px;
  box-shadow: 1px 1px 3px rgba(0, 0, 0, 0.5);
`;
const Panes = styled.div`
  display: flex;
  gap: 5px;
  height: 315px;
  padding: 0 3px 0 2px;
`;
const Filters = styled.div`
  display: flex;
  flex-direction: column;
  width: 119px;
  overflow: hidden;
  border: 1px solid ${c.line};
`;
const FilterHead = styled.div`
  display: flex;
  align-items: center;
  justify-content: space-between;
  height: 28px;
  padding: 0 6px;
  border-bottom: 1px solid ${c.line};
`;
const TreeRow = styled.div`
  display: flex;
  align-items: center;
  height: 22px;
  padding-left: ${(p) => p.$pl}px;
  white-space: nowrap;
`;
const Tree = styled.div`
  flex: 1;
  padding-top: 6px;
`;
const Chosen = styled.span`
  margin-left: 6px;
  padding: 1px 3px;
  background: ${c.select};
`;
const TreeText = styled.span`
  margin-left: 5px;
`;
const Scroll = styled.div`
  display: flex;
  align-items: center;
  flex: none;
  height: 21px;
  padding: 0 ${(p) => p.$pr}px 0 ${(p) => p.$pl}px;
  background: #efefef;
  border: ${(p) => (p.$framed ? "1px solid #8c93a0" : 0)};
`;
const Thumb = styled.span`
  flex: 1;
  height: 3px;
  border-radius: 2px;
  background: #8a8a8a;
`;
const InvertRow = styled.label`
  display: flex;
  align-items: center;
  height: 27px;
  margin-top: 2px;
  padding: 0 6px 0 5px;
  border-top: 1px solid ${c.line};
  white-space: nowrap;
`;
const Check = styled.input`
  appearance: none;
  width: 15px;
  height: 15px;
  margin: 0 5px 0 0;
  background: #f6f6f6;
  border: 1px solid #c8c8c8;
  border-radius: 3px;
`;
const TablePane = styled.div`
  display: flex;
  flex-direction: column;
  flex: 1;
  min-width: 0;
`;
const Grid = styled.table`
  table-layout: fixed;
  width: 100%;
  border-collapse: separate;
  border-spacing: 0;
`;
const Th = styled.th`
  height: 29px;
  padding: 0 0 0 4px;
  overflow: hidden;
  text-align: left;
  font-weight: 400;
  white-space: nowrap;
  background: ${c.head};
  border-right: ${(p) => (p.$split ? 3 : 1)}px solid ${c.line};
  &:last-child { border-right: 0; }
`;
const ThInner = styled.span`
  display: flex;
  align-items: center;
  justify-content: space-between;
  padding-right: 2px;
`;
const Td = styled.td`
  height: 23px;
  padding: 0 0 0 ${(p) => p.$pl || 0}px;
  white-space: nowrap;
  overflow: hidden;
  border-right: ${(p) => (p.$split ? 3 : 0)}px solid ${c.line};
  line-height: 20px;
`;
const Tr = styled.tr`
  background: ${(p) => (p.$on ? c.select : "transparent")};
`;
const RestTd = styled(Td)`
  height: 104px;
`;
const SheetFoot = styled.div`
  margin-top: 21px;
  padding-left: 7px;
  font-family: ${wide};
`;

const cols = [23, 94, 23, 23, 23, 23, 60, 80, 85, 69, 23, null];
const heads = ["S...", "Name", "O..", "F...", "L...", "P...", "Color", "Linetype", "Lineweight", "Transp...", "N..", "Description"];
const layers = [
  ["0", "#fff", "wh..."],
  ["circulo", "#ff0", "yel..."],
  ["pentagono", "#0ff", "cyan"],
  ["quadrado", "#f00", "red"],
  ["ret_ouro", "#f0f", "ma..."],
  ["ret_r2", "#00f", "blue"],
  ["triangulo", "#0f0", "gre..."],
];

function LayerManager() {
  return (
    <Manager aria-label="Layer properties manager">
      <Rail>
        <IconButton $h={20} aria-label="Close palette"><I s={12} box="0 0 12 12"><path d="m2 2 8 8M10 2l-8 8" stroke="#f2f2f2" strokeWidth="2.800" /></I></IconButton>
        <IconButton $h={28} aria-label="Auto-hide"><I s={12} box="0 0 12 12"><path d="M1 0h2v12H1zM10 1v10L4 6z" fill="#f2f2f2" /></I></IconButton>
        <IconButton $h={20} aria-label="Palette settings"><Gear s={14} color="#f2f2f2" hole="#2c333f" /></IconButton>
        <RailTitle>LAYER PROPERTIES MANAGER</RailTitle>
        <I s={22}><Sheets /><path d="M10 8h10v12H10z" fill="#fff" /><path d="M12 10h6v4h-6z" fill={c.blue} stroke="#333" strokeWidth=".8" /><path d="M12 17.500h5" stroke="#555" /></I>
      </Rail>
      <Sheet>
        <SheetTop>
          <span>Current layer: quadrado</span>
          <LayerSearch>
            <LayerSearchInput placeholder="Search for layer" aria-label="Search for layer" />
            <Magnifier s={18} />
          </LayerSearch>
        </SheetTop>
        <Tools>
          <IconButton $w={27} aria-label="New property filter"><I><Folder w={18} /><Funnel /></I></IconButton>
          <IconButton $w={27} aria-label="New group filter"><I><Folder w={18} /></I></IconButton>
          <Divider $m={3} />
          <IconButton $w={30} aria-label="Layer states manager"><PaletteMark /></IconButton>
          <Push $w={33} />
          <IconButton $w={27} aria-label="New layer"><I><Sheets /><StarMark x={15} y={14} r={5} /></I></IconButton>
          <IconButton $w={27} aria-label="New layer frozen"><I><Sheets /><SnowMark x={15} y={15} /></I></IconButton>
          <IconButton $w={27} aria-label="Delete layer"><I><Sheets /><path d="m12 12 6 6M18 12l-6 6" stroke={c.red} strokeWidth="2.200" /></I></IconButton>
          <IconButton $w={27} aria-label="Set current"><I><Sheets /><Tick /></I></IconButton>
          <Spring />
          <IconButton $w={28} aria-label="Refresh"><I><path d="M2.500 8A8 8 0 0 1 16 5M17.500 12A8 8 0 0 1 4 15" stroke={c.green} strokeWidth="2.600" /><path d="M19.500 2v7h-7zM.5 18v-7h7z" fill={c.green} /></I></IconButton>
          <ToggleWrap>
            <Toggle aria-label="Toggle override highlight" aria-describedby="tip"><I><path d="M2 1h10v10H2z" fill="#cfd6dd" /><path d="M7 9h12l-6 7H1z" fill="#d9dee3" /></I></Toggle>
            <Tip role="tooltip" id="tip">Toggle Override Highlight</Tip>
          </ToggleWrap>
          <IconButton $w={26} aria-label="Settings"><Gear /></IconButton>
        </Tools>
        <Panes>
          <Filters>
            <FilterHead>Filters<Double /></FilterHead>
            <Tree>
              <TreeRow $pl={8}>
                <I w={22} h={12} box="0 0 22 12"><path d="M.5.500h10v11H.5z" fill="#fff" stroke="#999" /><path d="M2.500 6h6" stroke="#2f5fa8" /><path d="M12 6h9" stroke="#c8ccd2" strokeDasharray="1 1" /></I>
                <I w={14} h={15}><Sheets /><Tick /></I>
                <Chosen>All</Chosen>
              </TreeRow>
              <TreeRow $pl={37}>
                <I w={16} h={22} box="0 0 16 22"><path d="M.5 0v12M.5 11.500h13" stroke="#c8ccd2" strokeDasharray="1 1" /></I>
                <I w={16} h={16}><Folder w={18} /><Funnel /></I>
                <TreeText>All Use</TreeText>
              </TreeRow>
            </Tree>
            <Scroll $framed $pl={20} $pr={47}><Thumb /></Scroll>
            <InvertRow>
              <Check type="checkbox" />Invert fil
              <Spring />
              <Double />
            </InvertRow>
          </Filters>
          <TablePane>
            <Grid>
              <colgroup>{cols.map((w, i) => <col key={i} width={w || undefined} />)}</colgroup>
              <thead>
                <tr>
                  {heads.map((h) => (
                    <Th key={h} $split={h === "Name"}>
                      {h === "Name" ? <ThInner>Name<Caret w={8} up /></ThInner> : h}
                    </Th>
                  ))}
                </tr>
              </thead>
              <tbody>
                {layers.map(([name, color, label], i) => (
                  <Tr key={name} $on={i === 0}>
                    <Td $pl={3}>
                      {name === "quadrado" ? (
                        <I w={16} h={12} box="0 0 16 12"><path d="m2 6 4 4 8-9" stroke={c.green} strokeWidth="2.800" /></I>
                      ) : (
                        <I w={16} h={12} box="0 0 16 12"><path d="M5 1h11l-5 8H0z" fill={c.blue} /></I>
                      )}
                    </Td>
                    <Td $pl={4} $split>{name}</Td>
                    <Td $pl={2}><Bulb /></Td>
                    <Td $pl={3}><Sun /></Td>
                    <Td $pl={3}><Unlock s={15} /></Td>
                    <Td $pl={3}><Printer /></Td>
                    <Td $pl={3}><Row $gap={5}><Swatch $s={15} $c={color} />{label}</Row></Td>
                    <Td $pl={3}>Continu...</Td>
                    <Td $pl={1}><Row $gap={5}><Rule $w={27} />Defa...</Row></Td>
                    <Td $pl={4}>0</Td>
                    <Td $pl={3}>
                      <I s={16} box="0 0 16 16"><path d="M1 5V1h3M9 1h3v3M1 10v3h3" stroke="#d6d6d6" /><path d="M3 3h7v8H3z" fill="#6d7480" stroke="#b0b4ba" /><SunMark x={11} y={11} r={2.2} /></I>
                    </Td>
                    <Td />
                  </Tr>
                ))}
                <tr><RestTd /><RestTd $split /><RestTd colSpan={10} /></tr>
              </tbody>
            </Grid>
            <Scroll $pl={21} $pr={158}><Thumb /></Scroll>
          </TablePane>
        </Panes>
        <SheetFoot>All: 7 layers displayed of 7 total layers</SheetFoot>
      </Sheet>
    </Manager>
  );
}

/* ---------- layout tabs and status bar ---------- */

const LayoutTabs = styled.nav`
  display: flex;
  align-items: center;
  height: 37px;
  padding: 0 0 7px 13px;
`;
const LayoutName = styled.div`
  display: flex;
  align-items: center;
  gap: 11px;
  padding-left: 10px;
`;
const Status = styled.footer`
  display: flex;
  height: 36px;
  padding: 0 5px 6px 5px;
  gap: 3px;
`;
const Lane = styled.div`
  flex: 1;
  margin-right: 2px;
  background: ${c.panel};
`;
const Seg = styled.div`
  display: flex;
  align-items: center;
  justify-content: ${(p) => p.$justify || "flex-start"};
  width: ${(p) => p.$w}px;
  height: 30px;
  margin-left: ${(p) => (p.$tight ? -2 : 0)}px;
  background: ${c.panel};
`;
const Cell = styled.button`
  display: flex;
  align-items: center;
  justify-content: center;
  width: ${(p) => p.$w || 30}px;
  height: 28px;
  gap: 6px;
  background: ${(p) => (p.$on ? c.active : "transparent")};
`;
const Mark = ({ fill }) => (
  <path d="M10 0c2 3 2 6 2 9l7 9-7-3-2 2-2-2-7 3 7-9c0-3 0-6 2-9z" fill={fill} />
);

function StatusBar() {
  const k = c.icon;
  return (
    <Status>
      <Lane />
      <Seg $w={59} $justify="center"><button>MODEL</button></Seg>
      <Seg $w={80}>
        <Cell $w={29} aria-label="Grid"><I><path d="M5.500 1v18M10.500 1v18M15.500 1v18M1 5.500h18M1 10.500h18M1 15.500h18" stroke={k} /></I></Cell>
        <Cell aria-label="Snap"><I w={16} h={16} box="0 0 16 16"><path d="M2 0v16M8 0v16M14 0v16" stroke={k} strokeWidth="3" strokeDasharray="3 3.500" /></I></Cell>
        <Cell $w={20} aria-label="Snap list"><Caret w={10} /></Cell>
      </Seg>
      <Seg $w={31} $justify="center"><Cell aria-label="Dynamic input"><I><path d="M0 6.500h9M4.500 2v9" stroke={k} /><path d="M8 12h12v6H8z" fill={k} /><path d="M9.500 13.500h2v3h-2z" fill={c.panel} /></I></Cell></Seg>
      <Seg $w={130} $tight>
        <Cell $w={30} aria-label="Ortho"><I><path d="M1.500 0v19.500H20M1.500 13.500h6v6" stroke={k} /></I></Cell>
        <Cell $w={28} $on aria-label="Polar tracking"><I><path d="M15 5a8 8 0 1 0 1 9" stroke="#fff" strokeWidth="1.400" /><path d="m8 11 9-9M8 11h12M14 8v6" stroke="#fff" strokeWidth="1.400" /></I></Cell>
        <Cell $w={22} aria-label="Polar list"><Caret w={10} /></Cell>
        <Cell $w={28} aria-label="Isodraft"><I><path d="m2 2 16 15" stroke={c.red} /><path d="M11.500 0v19" stroke={c.green} /><circle cx="11" cy="10" r="2" stroke={k} fill={c.panel} /></I></Cell>
        <Cell $w={22} aria-label="Isodraft list"><Caret w={10} /></Cell>
      </Seg>
      <Seg $w={80} $tight>
        <Push $w={1} />
        <Cell $w={28} $on aria-label="Object snap tracking"><I><path d="M0 17.500h20M1 17 16 3" stroke="#fff" strokeWidth="1.400" /><circle cx="8" cy="10" r="2" fill="#fff" /></I></Cell>
        <Push $w={2} />
        <Cell $w={28} $on aria-label="Object snap"><I><path d="M4 3h15v16H3V4" stroke="#fff" strokeWidth="1.400" /><path d="M.5.500h5v5h-5z" fill={c.active} stroke="#fff" /></I></Cell>
        <Cell $w={21} aria-label="Snap settings"><Caret w={10} /></Cell>
      </Seg>
      <Seg $w={132}>
        <Cell $w={29} $on aria-label="Annotation visibility"><I><Mark fill="#fff" /><circle cx="17" cy="4" r="3" stroke="#fff" /></I></Cell>
        <Cell $w={30} aria-label="Auto scale"><I><Mark fill={k} /><path d="m17 1-4 5h3l-2 4 6-6h-3l2-3z" fill={k} /></I></Cell>
        <Cell $w={30} aria-label="Annotation scale"><I><Mark fill={k} /></I></Cell>
        <Cell $w={43}>1:1<Caret w={10} /></Cell>
      </Seg>
      <Seg $w={50}>
        <Cell aria-label="Workspace"><Gear /></Cell>
        <Cell $w={20} aria-label="Workspace list"><Caret w={10} /></Cell>
      </Seg>
      <Seg $w={30} $tight><Cell aria-label="Annotation monitor"><I><path d="M10 1v18M1 10h18" stroke={k} strokeWidth="2.400" /></I></Cell></Seg>
      <Seg $w={31}><Cell aria-label="Isolate objects"><I><path d="M.5 1.500h7v7h-7z" stroke={k} /><circle cx="15.500" cy="8.500" r="4" stroke={k} /><path d="m8 12 4.500 7.500h-9z" stroke={k} /></I></Cell></Seg>
      <Seg $w={34} $justify="center">
        <Cell aria-label="Graphics performance"><I s={26} box="0 0 26 26"><circle cx="12" cy="11" r="10" fill="#2b64ad" /><path d="M0 14h9l1 8H0z" fill="#f5b921" /><path d="M6 1v14M0 6h18" stroke="#dbe9fa" strokeWidth="1.300" /><path d="M3 3h6v6H3z" stroke="#dbe9fa" fill="#2b64ad" /><path d="m11 18 4 5 10-10" stroke="#4aae54" strokeWidth="4" /></I></Cell>
      </Seg>
      <Seg $w={60}>
        <Cell aria-label="Clean screen"><I><path d="M.5 3.500h19v13H.5z" stroke={k} /><path d="M12 5.500h5.500V11zM8 14.500H2.500V9z" fill={k} /></I></Cell>
        <Cell aria-label="Customization"><I><path d="M0 2.500h20M0 10h20M0 17.500h20" stroke={k} strokeWidth="2" /></I></Cell>
      </Seg>
    </Status>
  );
}

/* ---------- desktop taskbar ---------- */

const Taskbar = styled.footer`
  display: flex;
  align-items: center;
  flex: none;
  height: 59px;
  padding: 0 23px 0 18px;
  color: #fff;
  background: #22211e;
  border-top: 1px solid #44423f;
`;
const TaskSearch = styled.label`
  display: flex;
  align-items: center;
  gap: 14px;
  width: 275px;
  height: 40px;
  margin: 0 7px 0 9px;
  padding-left: 14px;
  border-radius: 20px;
  background: #3c3a38;
  border: 1px solid #4b4947;
`;
const TaskInput = styled.input`
  flex: 1;
  min-width: 0;
  border: 0;
  padding: 0;
  background: transparent;
  font-size: 15px;
  &::placeholder { color: #d2d0ce; opacity: 1; }
`;
const TaskApps = styled.div`
  display: flex;
  gap: 10px;
`;
const TaskApp = styled.button`
  position: relative;
  display: flex;
  align-items: center;
  justify-content: center;
  width: 45px;
  height: 50px;
  border-radius: 5px;
  background: ${(p) => (p.$on ? "#363432" : "transparent")};
  box-shadow: ${(p) => (p.$on ? "inset 0 0 0 1px #403e3c, 4px 0 0 -1px #2e2c2a" : "none")};
`;
const RunDot = styled.span`
  position: absolute;
  bottom: 0;
  left: calc(50% - ${(p) => p.$w / 2}px);
  width: ${(p) => p.$w}px;
  height: 4px;
  border-radius: 2px;
  background: ${(p) => p.$c};
`;
const Badge = styled.span`
  position: absolute;
  top: 3px;
  right: 1px;
  width: 20px;
  height: 20px;
  border-radius: 10px;
  background: #f4806a;
  color: #2a1a16;
  line-height: 20px;
`;
const Weather = styled.button`
  display: flex;
  align-items: center;
  gap: 9px;
  margin-left: auto;
  margin-right: 50px;
  text-align: left;
  font-family: ${wide};
  line-height: 20px;
`;
const Soft = styled.span`
  color: #c9c8c6;
`;
const Clock = styled.button`
  width: 92px;
  margin: 0 8px 0 6px;
  text-align: right;
  font-size: 15px;
  line-height: 20px;
`;
const LogoText = styled.text`
  font-family: "Roboto", sans-serif;
  font-weight: 900;
  text-anchor: middle;
`;

const apps = [
  ["Task view", <I s={30} box="0 0 30 30" key="t"><path d="M8 1h22v20H8z" fill="#f4f4f4" /><path d="M0 9h22v20H0z" fill="#8a8a8a" fillOpacity=".85" /></I>],
  ["Teams", <I s={30} box="0 0 30 30" key="m"><circle cx="24.500" cy="6.500" r="3" fill="#5059c9" /><circle cx="16" cy="5.500" r="4.500" fill="#7b83eb" /><path d="M20 11h10v9a6 6 0 0 1-7 5z" fill="#5059c9" /><path d="M8 11h16v10a8 8 0 0 1-16 0z" fill="#7b83eb" /><path d="M0 7h15v16H0z" fill="#4048b0" /><LogoText x="7.500" y="20" fontSize="13" fill="#fff">T</LogoText></I>],
  ["Chrome", <I s={30} box="0 0 30 30" key="c"><circle cx="15" cy="15" r="15" fill="#34a853" /><path d="M15 0a15 15 0 0 1 13 7.500H15L8.500 19 2 7.500A15 15 0 0 1 15 0z" fill="#ea4335" /><path d="M28 7.500A15 15 0 0 1 15 30l6.500-11.500L22 7.500z" fill="#fbbc05" /><circle cx="15" cy="15" r="7.500" fill="#fff" /><circle cx="15" cy="15" r="5.800" fill="#3b7ded" /></I>],
  ["Edge", <I s={30} box="0 0 30 30" key="e"><defs><linearGradient id="eg" x1="0" x2="1"><stop offset="0" stopColor="#2f9fe8" /><stop offset=".6" stopColor="#35c7d8" /><stop offset="1" stopColor="#6ee05c" /></linearGradient></defs><circle cx="15" cy="15" r="15" fill="#1b7fd6" /><path d="M0 13C2 4 9 0 15 0c9 0 15 6 15 12 0 5-4 8-8 8-3 0-5-1-5-3 0-1 2-2 2-5 0-3-4-5-8-5C6 7 2 9 0 13z" fill="url(#eg)" /><path d="M12 14c-3 6 3 14 12 12l3-2c-5 6-13 7-18 3-4-4-3-11 3-13z" fill="#0c4e9a" /><path d="M13 15c-2 5 3 10 9 9 2 0 4-1 5-2l2-2c-3 3-9 3-11 0-2-1-3-3-2-5z" fill="#22211e" /></I>],
  ["Explorer", <I s={30} box="0 0 30 30" key="x"><path d="M0 3h9l3 3h18v4H0z" fill="#e3a215" /><path d="M0 7h30v21H0z" fill="#fcc93c" /><path d="M5 21h20v7H5z" fill="#1673c5" /><path d="M9 24.500h12" stroke="#0d4f8d" /></I>],
  ["Spotify", <FaSpotify key="s" size={30} color="#1ed760" />],
  ["Outlook", <I s={30} box="0 0 30 30" key="o"><path d="m4 10 13-8 13 8v18H6z" fill="#1e88e0" /><path d="m12 12 18-2v18H8z" fill="#45cdfb" /><path d="m14 19 16-10-5-3-13 9z" fill="#0f4fa8" /><path d="M0 8h15v16H0z" fill="#0f6cc9" /><LogoText x="7.500" y="21" fontSize="14" fill="#fff">O</LogoText></I>],
  ["WhatsApp", <FaWhatsapp key="w" size={32} color="#25d366" />],
  ["Lizard", <I s={30} box="0 0 30 30" key="l"><path d="M4 12C6 5 12 2 16 5l2 6c-2 4-9 4-13 4z" fill="#55b83f" /><circle cx="18" cy="5" r="3.500" fill="#fff" /><circle cx="24" cy="5" r="3.500" fill="#fff" /><circle cx="19" cy="5" r="1.400" fill="#111" /><circle cx="24" cy="5" r="1.400" fill="#111" /><path d="M15 8h12l-4 4h-8z" fill="#7bd35a" /><path d="M1 15h27" stroke="#7d6a4f" strokeWidth="1.400" /><path d="M6 16c-2 6 0 10 6 11l2-3c-4 0-5-3-3-7z" fill="#2f6d28" /><path d="M19 20h8v5l-4 4-4-4z" fill="#3fcf2f" /></I>],
  ["FileZilla", <I s={30} box="0 0 30 30" key="f"><path d="M1 1h28v28H1z" fill="#b50505" stroke="#b50505" strokeWidth="2" strokeDasharray="2 1" /><LogoText x="14" y="22" fontSize="20" fontStyle="italic" fill="#fff">Fz</LogoText></I>],
  ["AutoCAD", <I s={30} box="0 0 30 30" key="a"><path d="M1 1h4v21l-4 6z" fill="#f06a90" /><path d="M5 0h23v21H5z" fill="#e51050" /><path d="M4 21h25v9H4z" fill="#7a0a2c" /><LogoText x="16" y="17" fontSize="16" fill="#fff">A</LogoText><LogoText x="16.500" y="28" fontSize="8" fill="#fff">CAD</LogoText></I>],
];

function TaskbarRow() {
  return (
    <Taskbar>
      <TaskApp aria-label="Start">
        <I s={29} box="0 0 29 29"><defs><linearGradient id="wg" x1="0" y1="0" x2="1" y2="1"><stop offset="0" stopColor="#7fe5fd" /><stop offset="1" stopColor="#1a9bf5" /></linearGradient></defs><path d="M0 0h14v14H0zM15 0h14v14H15zM0 15h14v14H0zM15 15h14v14H15z" fill="url(#wg)" /></I>
      </TaskApp>
      <TaskSearch>
        <I s={18} box="0 0 18 18"><circle cx="8" cy="8" r="6.800" stroke="#e6e6e6" strokeWidth="1.800" /><path d="m13 13 4.500 4.500" stroke="#e6e6e6" strokeWidth="2" /></I>
        <TaskInput placeholder="Procurar" aria-label="Procurar" />
      </TaskSearch>
      <TaskApps>
        {apps.map(([name, art]) => (
          <TaskApp key={name} aria-label={name} $on={name === "AutoCAD"}>
            {art}
            {name === "WhatsApp" && <Badge>2</Badge>}
            {name === "Explorer" && <RunDot $w={8} $c="#9a9896" />}
            {name === "AutoCAD" && <RunDot $w={20} $c="#f4836a" />}
          </TaskApp>
        ))}
      </TaskApps>
      <Weather>
        <I s={28} box="0 0 28 28"><defs><linearGradient id="sg" x1="0" y1="0" x2="0" y2="1"><stop offset="0" stopColor="#f6c23a" /><stop offset="1" stopColor="#f0701c" /></linearGradient></defs><circle cx="13" cy="14" r="12.500" fill="url(#sg)" /><path d="M14 22a4 4 0 0 1 0-7 5 5 0 0 1 9 0 3.600 3.600 0 0 1 1 7z" fill="#c3d6f6" /></I>
        <span>28°C<br /><Soft>Ger. Ensolarado</Soft></span>
      </Weather>
      <IconButton aria-label="Hidden icons"><I w={14} h={9} box="0 0 14 9"><path d="m1 8 6-6 6 6" stroke="#fff" strokeWidth="2" /></I></IconButton>
      <Push $w={8} />
      <IconButton aria-label="Wi-Fi"><I><path d="M1 8a13 13 0 0 1 18 0M4 11a9 9 0 0 1 12 0M6.500 14a5 5 0 0 1 7 0" stroke="#fff" strokeWidth="1.500" /><circle cx="10" cy="16.500" r="1.800" fill="#fff" /></I></IconButton>
      <IconButton aria-label="Volume muted"><I><path d="M1 7.500h3.500L9 3.500v13l-4.500-4H1zM13 7.500l5 5M18 7.500l-5 5" stroke="#fff" strokeWidth="1.400" /></I></IconButton>
      <IconButton aria-label="Battery"><I><path d="M1 5.500h15a1 1 0 0 1 1 1v8a1 1 0 0 1-1 1H2a1 1 0 0 1-1-1z" stroke="#fff" strokeWidth="1.600" /><path d="M3 7.500h7v6H3zM18 8h2v5h-2z" fill="#fff" /></I></IconButton>
      <Clock>12:14<br />19/09/2025</Clock>
      <I s={20} box="0 0 20 20"><path d="M2 15V9a7 7 0 0 1 9-6.500V8h6v7l1 2H1z" fill="#fff" /><path d="M7 18.500h6" stroke="#fff" strokeWidth="2.500" /><path d="M5 8h3l-3 4h3M10 10h3l-3 4h3" stroke="#22211e" strokeWidth="1.200" /><path d="M13 1h4l-4 4h4" stroke="#fff" strokeWidth="1.300" /></I>
    </Taskbar>
  );
}

export default function App() {
  return (
    <Desktop>
      <Global />
      <AppWindow>
        <Title />
        <Tabs>
          {["Home", "Insert", "Annotate", "Parametric", "View", "Manage", "Output", "Add-ins", "Collaborate", "Express Tools", "Featured Apps"].map((t) => (
            <Tab key={t} $on={t === "Home"}>{t}</Tab>
          ))}
          <Pill><Caret w={6} color="#666" up /></Pill>
          <Caret w={6} />
        </Tabs>
        <RibbonBar />
        <DocTabs><Slash /><DocTab>Star</DocTab></DocTabs>
        <Drawing />
        <LayoutTabs>
          <DocTab $on>Model</DocTab>
          <LayoutName><button>Layout1</button><Slash /></LayoutName>
          <LayoutName><button>Layout2</button><Slash /></LayoutName>
          <LayoutName>
            <IconButton $w={20} aria-label="New layout"><I s={16} box="0 0 16 16"><path d="M8 0v16M0 8h16" stroke="#dcdcdc" strokeWidth="2.400" /></I></IconButton>
            <Slash />
          </LayoutName>
        </LayoutTabs>
        <StatusBar />
        <LayerManager />
      </AppWindow>
      <TaskbarRow />
    </Desktop>
  );
}
